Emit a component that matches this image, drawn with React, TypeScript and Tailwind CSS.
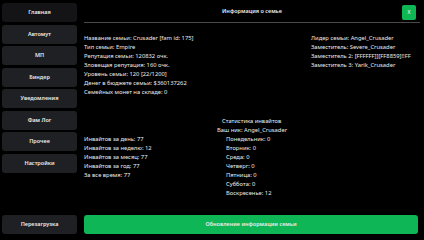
const menu = ['Главная', 'Автомут', 'МП', 'Биндер', 'Уведомления', 'Фам Лог', 'Прочее', 'Настройки'];

const familyInfo = [
  'Название семьи: Crusader [fam id: 175]',
  'Тип семьи: Empire',
  'Репутация семьи: 120832 очк.',
  'Зловещая репутация: 160 очк.',
  'Уровень семьи: 120 [22/1200]',
  'Денег в бюджете семьи: $360137262',
  'Семейных монет на складе: 0',
];

const leaders = [
  'Лидер семьи: Angel_Crusader',
  'Заместитель: Severe_Crusader',
  'Заместитель 2: [FFFFFF]][FF8859]!!FF',
  'Заместитель 3: Yarik_Crusader',
];

const invites = [
  'Инвайтов за день: 77',
  'Инвайтов за неделю: 12',
  'Инвайтов за месяц: 77',
  'Инвайтов за год: 77',
  'За все время: 77',
];

const days = [
  'Понедельник: 0',
  'Вторник: 0',
  'Среда: 0',
  'Четверг: 0',
  'Пятница: 0',
  'Суббота: 0',
  'Воскресенье: 12',
];

export default function App() {
  return (
    <div
      className="w-[424px] h-[240px] bg-black text-[#ececec] flex overflow-hidden"
      style={{ fontFamily: '"Noto Sans", sans-serif' }}
    >
      {/* sidebar */}
      <div className="w-[79px] pl-[2px] pr-[2px] pt-[3px] pb-[6px] flex flex-col">
        <div className="flex flex-col gap-[2.5px]">
          {menu.map((item, i) => (
            <div
              key={item}
              className={`h-[19px] rounded-[3px] flex items-center justify-center text-[5.5px] font-semibold ${
                i === 0 ? 'bg-[#141416]' : 'bg-[#1f2024]'
              }`}
            >
              {item}
            </div>
          ))}
        </div>
        <div className="mt-auto h-[19px] rounded-[3px] bg-[#1f2024] flex items-center justify-center text-[5.5px] font-semibold">
          Перезагрузка
        </div>
      </div>

      {/* main */}
      <div className="flex-1 flex flex-col pl-[5px] pr-[6px] pb-[6px]">
        <div className="relative h-[23px] mr-[-2px] border-b border-[#4a4a4a] flex items-center justify-center pt-[1px]">
          <span className="text-[5.5px] font-semibold">Информация о семье</span>
          <div className="absolute right-[4px] top-[5px] w-[14px] h-[15px] rounded-[2px] bg-[#0fb656] flex items-center justify-center text-[5px] text-white">
            X
          </div>
        </div>

        <div className="flex mt-[11px] text-[5.8px] leading-[9px]">
          <div className="w-[227px]">
            {familyInfo.map((t) => (
              <div key={t}>{t}</div>
            ))}
          </div>
          <div>
            {leaders.map((t) => (
              <div key={t}>{t}</div>
            ))}
          </div>
        </div>

        <div className="flex mt-[20px] text-[5.8px] leading-[9px]">
          <div className="w-[133px] pt-[18px]">
            {invites.map((t) => (
              <div key={t}>{t}</div>
            ))}
          </div>
          <div>
            <div className="pl-[5px]">Статистика инвайтов</div>
            <div>Ваш ник: Angel_Crusader</div>
            <div className="pl-[9px]">
              {days.map((t) => (
                <div key={t}>{t}</div>
              ))}
            </div>
          </div>
        </div>

        <div className="mt-auto h-[19px] rounded-[3px] bg-[#0fb656] flex items-center justify-center text-[5.5px] font-semibold">
          Обновление информации семьи
        </div>
      </div>
    </div>
  );
}
